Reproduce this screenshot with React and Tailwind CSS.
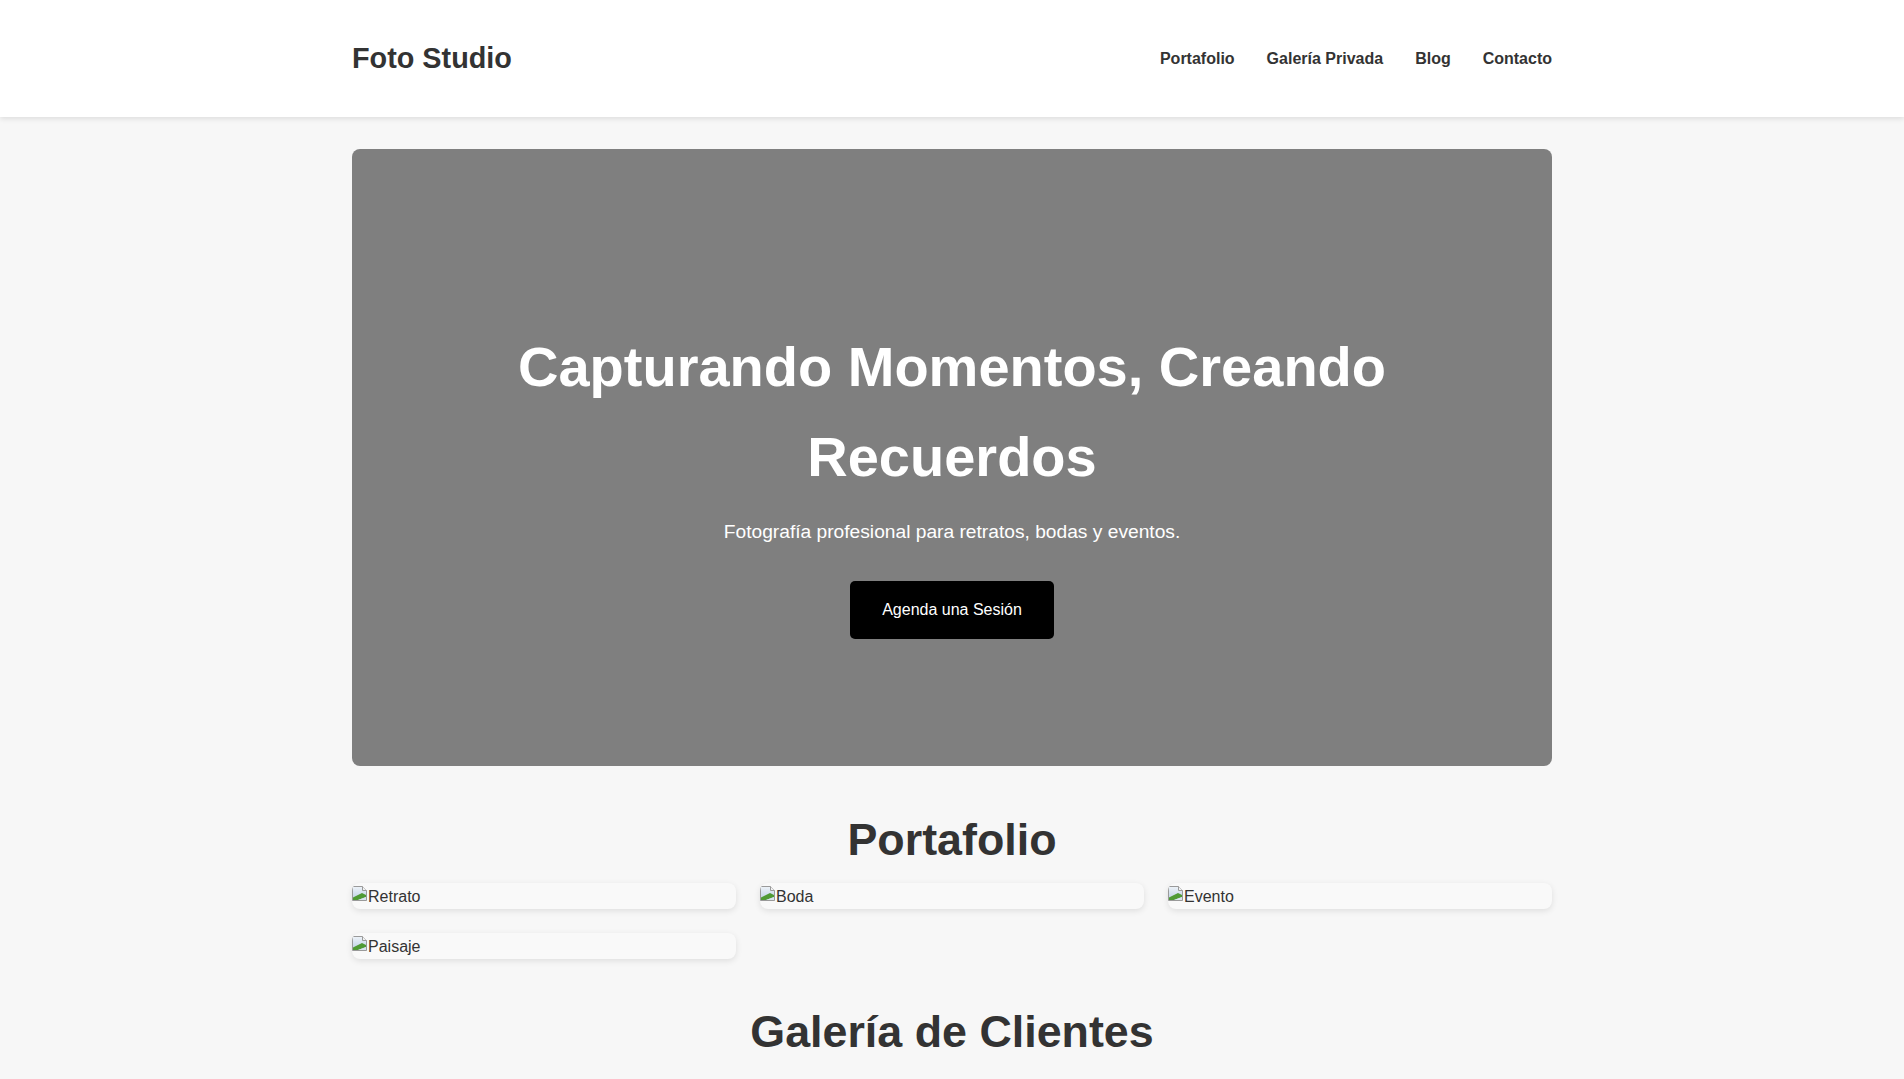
import React from "react";

function BrokenImg({ alt }) {
  return (
    <span className="inline-flex items-start">
      <svg width="16" height="16" viewBox="0 0 16 16" className="shrink-0">
        <defs>
          <linearGradient id="sky" x1="0" y1="0" x2="0" y2="1">
            <stop offset="0" stopColor="#eef3f8" />
            <stop offset="1" stopColor="#b9cde3" />
          </linearGradient>
        </defs>
        <path d="M0.5 1.5 H10.5 L14.5 5.5 V15.5 H0.5 Z" fill="url(#sky)" stroke="#9a9a9a" />
        <path d="M10.5 1.5 V5.5 H14.5" fill="#f2f2f2" stroke="#9a9a9a" />
        <path d="M1 15 V12.5 L10 8 L14 10 V12 L6 15 Z" fill="#4f9a34" />
        <path d="M6 15 L14 12 V15 Z" fill="#d9e4ee" />
      </svg>
      <span className="-mt-[1px]">{alt}</span>
    </span>
  );
}

export default function App() {
  const items = ["Retrato", "Boda", "Evento", "Paisaje"];
  return (
    <div className="min-h-screen bg-[#f7f7f7] text-[#333] leading-[1.6] font-['Liberation_Sans',Arial,sans-serif]">
      <header className="bg-white shadow-[0_2px_5px_rgba(0,0,0,0.1)]">
        <div className="mx-auto max-w-[1200px] h-[117px] flex items-center justify-between">
          <div className="text-[28.8px] font-bold">Foto Studio</div>
          <nav className="flex gap-8 text-base font-bold">
            <a href="#" className="text-[#333]">Portafolio</a>
            <a href="#" className="text-[#333]">Galería Privada</a>
            <a href="#" className="text-[#333]">Blog</a>
            <a href="#" className="text-[#333]">Contacto</a>
          </nav>
        </div>
      </header>

      <main className="mx-auto max-w-[1200px]">
        <section className="mt-8 h-[617px] rounded-lg bg-[#7f7f7f] text-white text-center pt-[173px]">
          <h1 className="mx-auto max-w-[900px] text-[56px] font-bold leading-[1.6]">
            Capturando Momentos, Creando Recuerdos
          </h1>
          <p className="mt-4 text-[19.2px] leading-[1.6]">
            Fotografía profesional para retratos, bodas y eventos.
          </p>
          <a href="#" className="inline-block mt-[33px] bg-black text-white text-base px-8 py-4 rounded-[5px] leading-[1.6]">
            Agenda una Sesión
          </a>
        </section>

        <section className="mt-[47px]">
          <h2 className="text-center text-[44.8px] font-bold leading-[1.2] mb-4">Portafolio</h2>
          <div className="grid grid-cols-3 gap-6">
            {items.map((it) => (
              <div key={it} className="rounded-lg bg-[#f9f9f9] shadow-[0_2px_6px_rgba(0,0,0,0.1)] overflow-hidden h-[26px]">
                <BrokenImg alt={it} />
              </div>
            ))}
          </div>
        </section>

        <section className="mt-[46px] pb-16">
          <h2 className="text-center text-[44.8px] font-bold leading-[1.2] mb-4">Galería de Clientes</h2>
          <div className="h-[200px]"></div>
        </section>
      </main>
    </div>
  );
}
